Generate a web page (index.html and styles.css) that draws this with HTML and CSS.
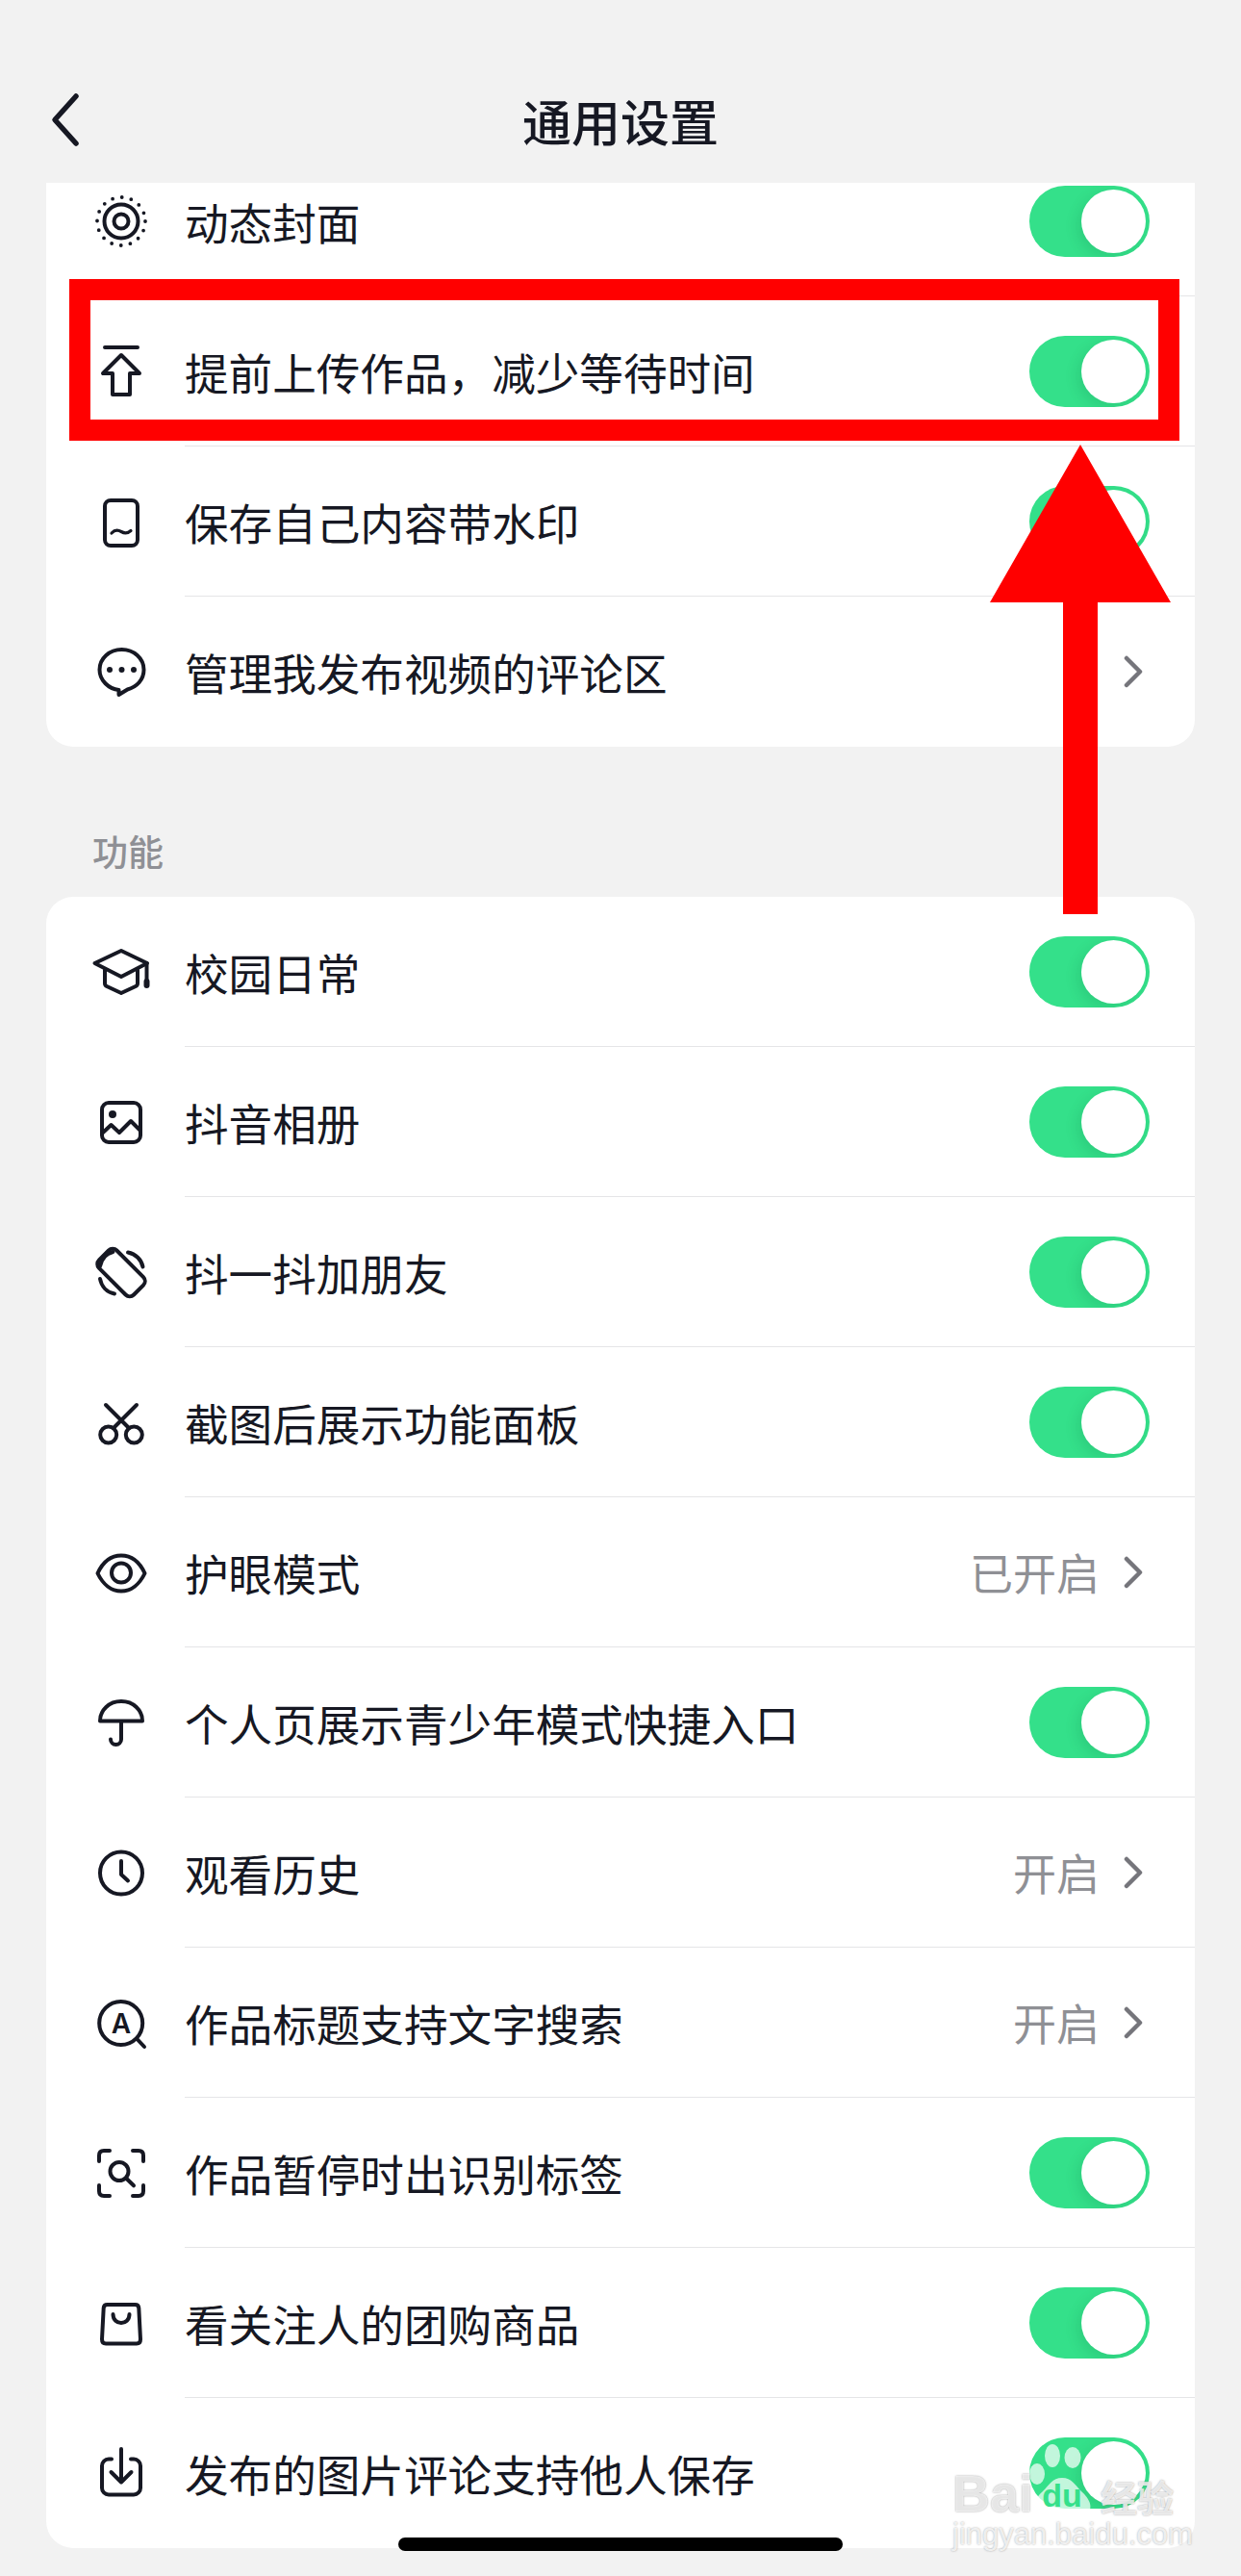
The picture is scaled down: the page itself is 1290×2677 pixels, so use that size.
FILE: index.html
```html
<!DOCTYPE html>
<html lang="zh-CN">
<head>
<meta charset="utf-8">
<title>通用设置</title>
<link rel="stylesheet" href="styles.css">
</head>
<body>
<div class="page">
  <header class="header">
    <svg class="back" viewBox="0 0 40 60"><path d="M31 5 9 29.500 31 54"/></svg>
    <h1 class="title">通用设置</h1>
  </header>

  <section class="card card-top">
    <div class="row row-cut">
      <svg class="icon" viewBox="0 0 60 60"><circle class="dots" cx="30" cy="30" r="25"/><circle cx="30" cy="30" r="17.500"/><circle cx="30" cy="30" r="7.500"/></svg>
      <div class="row-body"><span class="label">动态封面</span><span class="toggle"><i class="knob"></i></span></div>
    </div>
    <div class="row">
      <svg class="icon" viewBox="0 0 60 60"><path d="M13 5H47M30 13 11 32H21V54H39V32H49Z"/></svg>
      <div class="row-body"><span class="label">提前上传作品，减少等待时间</span><span class="toggle"><i class="knob"></i></span></div>
    </div>
    <div class="row">
      <svg class="icon" viewBox="0 0 60 60"><rect x="13" y="8" width="34" height="47" rx="6"/><path class="thin" d="M20 42c3.300-3.500 6.500-3.500 10-1.500s6.700 2 10-1"/></svg>
      <div class="row-body"><span class="label">保存自己内容带水印</span><span class="toggle"><i class="knob"></i></span></div>
    </div>
    <div class="row row-last">
      <svg class="icon" viewBox="0 0 60 60"><path d="M30.500 7C18 7 7.500 16 7.500 28 7.500 39 17 48 27.500 49V54L36.500 48.500C46 46 53.500 38.500 53.500 28 53.500 16 43 7 30.500 7Z"/><circle class="fill" cx="18" cy="28" r="3"/><circle class="fill" cx="30.500" cy="28" r="3"/><circle class="fill" cx="43" cy="28" r="3"/></svg>
      <div class="row-body"><span class="label">管理我发布视频的评论区</span><span class="more"><svg class="chev" viewBox="0 0 22 34"><path d="M4 3 18 17 4 31"/></svg></span></div>
    </div>
  </section>

  <div class="section-label">功能</div>

  <section class="card">
    <div class="row">
      <svg class="icon" viewBox="0 0 60 60"><path d="M2.500 21 30 8 57 21 30 35Z"/><path d="M13 28V42Q13 44 15 45L30 52 45 45Q47 44 47 42V28M56.500 21V40"/><rect class="fill" x="53.500" y="37" width="6" height="10" rx="3"/></svg>
      <div class="row-body"><span class="label">校园日常</span><span class="toggle"><i class="knob"></i></span></div>
    </div>
    <div class="row">
      <svg class="icon" viewBox="0 0 60 60"><rect x="10" y="10" width="40" height="41" rx="7"/><circle class="fill" cx="21" cy="22" r="4"/><path d="M11 41 19.500 33 28 41 40 29 50 39"/></svg>
      <div class="row-body"><span class="label">抖音相册</span><span class="toggle"><i class="knob"></i></span></div>
    </div>
    <div class="row">
      <svg class="icon" viewBox="0 0 60 60"><rect x="17" y="5" width="26" height="51" rx="6" transform="rotate(-45 30 30.500)"/><path d="M37 9.500C45 11 51 17 52.500 24.500M8 37C9.500 45 15 51 23 52.500M8 24C9.500 16 15 10.500 21.500 9"/></svg>
      <div class="row-body"><span class="label">抖一抖加朋友</span><span class="toggle"><i class="knob"></i></span></div>
    </div>
    <div class="row">
      <svg class="icon" viewBox="0 0 60 60"><circle cx="16.700" cy="43" r="8.500"/><circle cx="43.300" cy="43" r="8.500"/><path d="M14 12 38 36M46 12 22 36"/></svg>
      <div class="row-body"><span class="label">截图后展示功能面板</span><span class="toggle"><i class="knob"></i></span></div>
    </div>
    <div class="row">
      <svg class="icon" viewBox="0 0 60 60"><path d="M5.500 31C11 19 20 12.500 30 12.500S49 19 54.500 31C49 42.500 40 49.500 30 49.500S11 42.500 5.500 31Z"/><circle cx="30" cy="30.500" r="10"/></svg>
      <div class="row-body"><span class="label">护眼模式</span><span class="more"><span class="value">已开启</span><svg class="chev" viewBox="0 0 22 34"><path d="M4 3 18 17 4 31"/></svg></span></div>
    </div>
    <div class="row">
      <svg class="icon" viewBox="0 0 60 60"><path d="M8 28.500C8 17 17.500 8 30 8S52 17 52 28.500Z"/><path d="M30 29V47.500A5.500 5.500 0 0 1 19 47.500"/></svg>
      <div class="row-body"><span class="label">个人页展示青少年模式快捷入口</span><span class="toggle"><i class="knob"></i></span></div>
    </div>
    <div class="row">
      <svg class="icon" viewBox="0 0 60 60"><circle cx="30" cy="30.500" r="22"/><path d="M30 18V32L37 38.500"/></svg>
      <div class="row-body"><span class="label">观看历史</span><span class="more"><span class="value">开启</span><svg class="chev" viewBox="0 0 22 34"><path d="M4 3 18 17 4 31"/></svg></span></div>
    </div>
    <div class="row">
      <svg class="icon" viewBox="0 0 60 60"><circle cx="29.700" cy="30.500" r="22.500"/><path d="M46.500 47 54 55"/><text class="icon-letter" x="30" y="40.500">A</text></svg>
      <div class="row-body"><span class="label">作品标题支持文字搜索</span><span class="more"><span class="value">开启</span><svg class="chev" viewBox="0 0 22 34"><path d="M4 3 18 17 4 31"/></svg></span></div>
    </div>
    <div class="row">
      <svg class="icon" viewBox="0 0 60 60"><path d="M18 7H12Q7 7 7 12V18M42 7H48Q53 7 53 12V18M18 54H12Q7 54 7 49V43M42 54H48Q53 54 53 49V43"/><circle cx="28" cy="28.500" r="9.500"/><path d="M35.500 36 43 43.300"/></svg>
      <div class="row-body"><span class="label">作品暂停时出识别标签</span><span class="toggle"><i class="knob"></i></span></div>
    </div>
    <div class="row">
      <svg class="icon" viewBox="0 0 60 60"><path d="M15.500 11H44.500Q48 11 48.300 14.500L50 47Q50 51.500 46 51.500H14Q10 51.500 10 47L11.700 14.500Q12 11 15.500 11Z"/><path d="M21.500 21C21.500 33 38.500 33 38.500 21"/></svg>
      <div class="row-body"><span class="label">看关注人的团购商品</span><span class="toggle"><i class="knob"></i></span></div>
    </div>
    <div class="row row-last">
      <svg class="icon" viewBox="0 0 60 60"><path d="M20 15.500H17A7 7 0 0 0 10 22.500V45.500A7 7 0 0 0 17 52.500H43A7 7 0 0 0 50 45.500V22.500A7 7 0 0 0 43 15.500H40M30 5V39M19.500 29 30 39.500 40.500 29"/></svg>
      <div class="row-body"><span class="label">发布的图片评论支持他人保存</span><span class="toggle"><i class="knob"></i></span></div>
    </div>
  </section>

  <div class="annotation-box"></div>
  <svg class="annotation-arrow" viewBox="0 0 188 488"><path d="M94 0 188 164H112V488H76V164H0Z"/></svg>

  <div class="home-bar"></div>

  <div class="watermark">
    <svg class="paw" viewBox="0 0 70 76"><ellipse cx="8" cy="32" rx="8" ry="11"/><ellipse cx="24" cy="13" rx="8" ry="12"/><ellipse cx="45" cy="15" rx="8.500" ry="11"/><ellipse cx="61" cy="33" rx="6" ry="11"/><path d="M11 76C0 68 5 58 14 50 20 44 24 36 34 36 44 36 48 44 54 50 63 58 68 68 58 76Z"/><text class="paw-text" x="34" y="66">du</text></svg>
    <div class="wm-line"><span class="wm-bai">Bai</span><span class="wm-jy">经验</span></div>
    <div class="wm-url">jingyan.baidu.com</div>
  </div>
</div>
</body>
</html>
```

FILE: styles.css
```css
* { box-sizing: border-box; }
html, body { margin: 0; padding: 0; }
body {
  font-family: "Noto Sans CJK SC", "Noto Sans", sans-serif;
  color: #161823;
  background: #f2f2f2;
}
.page {
  position: relative;
  width: 1290px;
  height: 2677px;
  overflow: hidden;
  background: #f2f2f2;
}
.header {
  height: 190px;
  padding: 60px 0 0 48px;
  display: flex;
  align-items: center;
  position: relative;
}
.back {
  width: 40px;
  height: 60px;
}
.back path {
  fill: none;
  stroke: #161823;
  stroke-width: 5.500;
  stroke-linecap: round;
  stroke-linejoin: round;
}
.title {
  margin: 0;
  flex: 1;
  padding-right: 88px;
  text-align: center;
  font-size: 51px;
  font-weight: 500;
  line-height: 60px;
}
.card {
  margin: 0 48px;
  background: #fff;
  border-radius: 28px;
  overflow: hidden;
}
.card-top {
  border-radius: 0 0 28px 28px;
}
.row {
  height: 156px;
  display: flex;
  align-items: stretch;
  padding-left: 48px;
}
.row-cut {
  margin-top: -38px;
}
.icon {
  flex: none;
  width: 60px;
  height: 60px;
  align-self: center;
  margin-right: 36px;
  overflow: visible;
}
.icon path, .icon circle, .icon rect {
  fill: none;
  stroke: #161823;
  stroke-width: 4;
  stroke-linecap: round;
  stroke-linejoin: round;
}
.icon .thin { stroke-width: 3.200; }
.icon .dots {
  stroke-width: 3.800;
  stroke-dasharray: 0 9.817;
}
.icon .fill {
  fill: #161823;
  stroke: none;
}
.icon-letter {
  font-family: "Inter", "Liberation Sans", sans-serif;
  font-size: 28px;
  font-weight: 600;
  text-anchor: middle;
  fill: #161823;
}
.row-body {
  flex: 1;
  display: flex;
  align-items: center;
  justify-content: space-between;
  padding-right: 47px;
  border-bottom: 1.500px solid #e5e5e7;
}
.row-last .row-body { border-bottom: 0; }
.label {
  font-size: 45.600px;
  line-height: 60px;
  white-space: nowrap;
}
.toggle {
  position: relative;
  display: block;
  width: 125px;
  height: 74px;
  border-radius: 37px;
  background: #34e08a;
  overflow: hidden;
}
.knob {
  position: absolute;
  top: 4px;
  right: 4px;
  width: 67px;
  height: 66px;
  border-radius: 50%;
  background: #fff;
  box-shadow: -4px 5px 14px rgba(8, 90, 50, .14);
}
.more {
  display: flex;
  align-items: center;
}
.value {
  font-size: 45px;
  line-height: 60px;
  color: #8f9095;
  margin-right: 24px;
}
.chev {
  width: 22px;
  height: 34px;
  margin-right: 6px;
}
.chev path {
  fill: none;
  stroke: #75757b;
  stroke-width: 4.500;
  stroke-linecap: round;
  stroke-linejoin: round;
}
.section-label {
  height: 156px;
  padding: 86px 0 0 96px;
  font-size: 37px;
  line-height: 44px;
  font-weight: 500;
  color: #8f9095;
}
.annotation-box {
  position: absolute;
  left: 72px;
  top: 290px;
  width: 1154px;
  height: 168px;
  border: 22px solid #f00;
}
.annotation-arrow {
  position: absolute;
  left: 1029px;
  top: 462px;
  width: 188px;
  height: 488px;
}
.annotation-arrow path { fill: #f00; }
.home-bar {
  position: absolute;
  left: 414px;
  top: 2637px;
  width: 462px;
  height: 14px;
  border-radius: 7px;
  background: #000;
}
.watermark {
  position: absolute;
  left: 990px;
  top: 2538px;
  width: 240px;
  height: 112px;
}
.paw {
  position: absolute;
  left: 80px;
  top: 1px;
  width: 70px;
  height: 76px;
}
.paw ellipse, .paw path { fill: rgba(255, 255, 255, .7); }
.paw-text {
  font-family: "Liberation Sans", sans-serif;
  font-size: 34px;
  font-weight: 700;
  text-anchor: middle;
  fill: #34e08a;
}
.wm-line {
  position: absolute;
  left: 0;
  top: 28px;
  width: 230px;
  display: flex;
  justify-content: space-between;
  align-items: baseline;
  line-height: 50px;
  color: rgba(255, 255, 255, .75);
  text-shadow: 0 0 2px rgba(120, 120, 120, .75);
}
.wm-bai {
  font-family: "Liberation Sans", sans-serif;
  font-size: 54px;
  font-weight: 700;
}
.wm-jy {
  font-size: 38px;
  font-weight: 700;
}
.wm-url {
  position: absolute;
  left: 0;
  top: 78px;
  font-family: "Liberation Sans", sans-serif;
  font-size: 31px;
  line-height: 36px;
  white-space: nowrap;
  color: rgba(255, 255, 255, .8);
  text-shadow: 0 0 2px rgba(120, 120, 120, .7);
}
```
